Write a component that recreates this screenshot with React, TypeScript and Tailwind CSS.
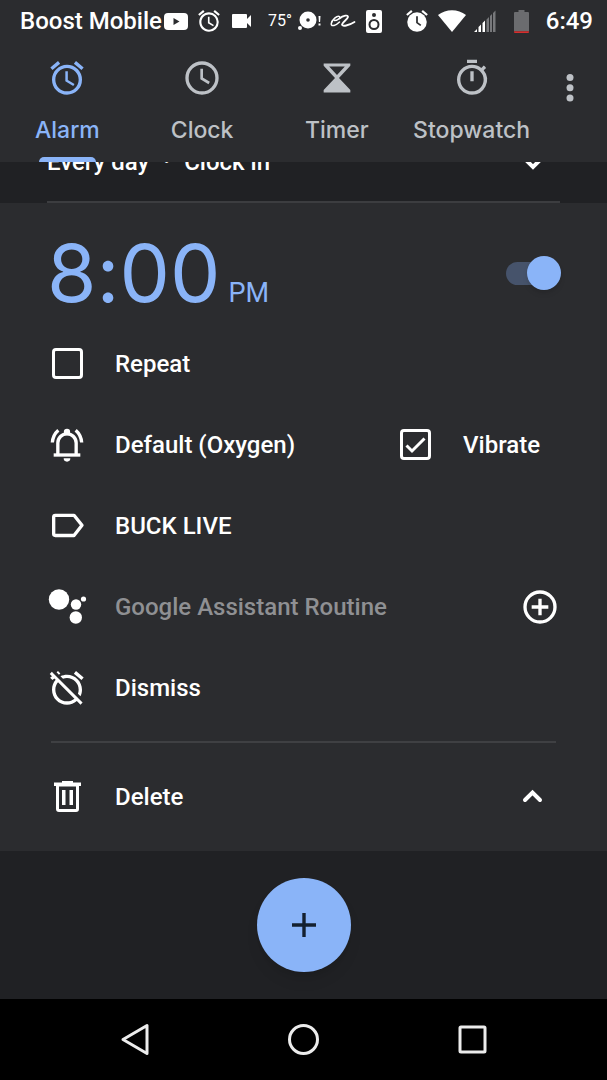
import React, { useState } from "react";

const ALARM_PATH =
  "M22 5.72l-4.6-3.86-1.29 1.53 4.6 3.86L22 5.72zM7.88 3.39L6.6 1.86 2 5.71l1.29 1.53 4.59-3.85zM12.5 8H11v6l4.75 2.85.75-1.23-4-2.37V8zM12 4c-4.97 0-9 4.03-9 9s4.02 9 9 9a9 9 0 0 0 0-18zm0 16c-3.87 0-7-3.13-7-7s3.13-7 7-7 7 3.13 7 7-3.13 7-7 7z";

const tabs = [
  {
    id: "alarm",
    label: "Alarm",
    icon: <path d={ALARM_PATH} />,
  },
  {
    id: "clock",
    label: "Clock",
    icon: (
      <g fill="none" stroke="currentColor">
        <circle cx="12" cy="12" r="9" strokeWidth="2" />
        <path d="M11.8 6.5V12.3L16.3 15" strokeWidth="1.6" />
      </g>
    ),
  },
  {
    id: "timer",
    label: "Timer",
    icon: (
      <path
        fillRule="evenodd"
        d="M4 3.3H20V4.6L13.2 12 20 19.2V20.7H4V19.2L10.8 12 4 4.6ZM7.3 5.1L12 10.2 16.7 5.1Z"
      />
    ),
  },
  {
    id: "stopwatch",
    label: "Stopwatch",
    icon: (
      <path d="M15 1H9v2h6V1zm-4 13h2V8h-2v6zm8.03-6.61 1.42-1.42c-.43-.51-.9-.99-1.41-1.41l-1.42 1.42A8.962 8.962 0 0 0 12 4c-4.97 0-9 4.03-9 9s4.02 9 9 9a8.994 8.994 0 0 0 7.03-14.61zM12 20c-3.87 0-7-3.13-7-7s3.13-7 7-7 7 3.13 7 7-3.13 7-7 7z" />
    ),
  },
];

function StatusBar() {
  return (
    <div className="flex h-[42px] items-center pl-5 pr-3.5 text-2xl font-medium text-white">
      <span>Boost Mobile</span>
      {/* Notification icons */}
      <svg className="ml-0.5 h-[17px] w-6" viewBox="0 0 24 17">
        <rect width="24" height="17" rx="4" fill="white" />
        <path d="M9.5 5l6 3.5-6 3.5z" fill="#2b2c2f" />
      </svg>
      <svg className="ml-2 size-[26px]" viewBox="0 0 24 24" fill="white">
        <path d={ALARM_PATH} />
      </svg>
      <svg className="ml-2.5 h-3.5 w-5" viewBox="0 0 20 14" fill="white">
        <path d="M1 0h13a1 1 0 0 1 1 1v4l4-4v12l-4-4v4a1 1 0 0 1-1 1H1a1 1 0 0 1-1-1V1a1 1 0 0 1 1-1z" />
      </svg>
      <span className="ml-4 text-base font-normal">75°</span>
      <svg className="ml-1.5 h-6 w-6" viewBox="0 0 24 24">
        <circle cx="10" cy="11" r="8.5" fill="white" />
        <circle cx="2" cy="19" r="2" fill="white" />
        <circle cx="10" cy="11" r="1.8" fill="#2b2c2f" />
        <path d="M20.5 7h2l-.4 6h-1.2zM20.5 14.5h2v2h-2z" fill="white" />
      </svg>
      <svg className="ml-2 h-5 w-[26px]" viewBox="0 0 26 20" fill="none" stroke="white" strokeLinecap="round">
        <path d="M4.5 9.5C7 9.5 11 7 9.5 5.5C7.5 4 1.5 9 1.2 13C1.200 16 6 14.500 9.500 11" strokeWidth="1.5" />
        <path d="M9.500 7.500C13 4.500 18.500 3.500 18 6C17.500 8.500 12.500 11 12 13.500C12 16 19 14.500 24.500 11" strokeWidth="1.8" />
      </svg>
      <svg className="ml-2.5 h-[23px] w-4" viewBox="0 0 16 23">
        <rect width="16" height="23" rx="2" fill="white" />
        <circle cx="8" cy="5" r="2" fill="#2b2c2f" />
        <circle cx="8" cy="14.5" r="4.5" fill="none" stroke="#2b2c2f" strokeWidth="2" />
      </svg>

      {/* System icons */}
      <svg className="ml-auto size-[26px]" viewBox="0 0 24 24" fill="white">
        <path d="M22 5.72l-4.6-3.86-1.29 1.53 4.6 3.86L22 5.72zM7.88 3.39L6.6 1.86 2 5.71l1.29 1.53 4.59-3.85z" />
        <circle cx="12" cy="13" r="9" />
        <path d="M12 7.5V13.5L15.5 16" fill="none" stroke="#2b2c2f" strokeWidth="1.6" />
      </svg>
      <svg className="ml-2 h-[22px] w-7" viewBox="0 0 28 22" fill="white">
        <path d="M0 5C8-1.5 20-1.5 28 5L14 22z" />
      </svg>
      <svg className="ml-2 h-[22px] w-[22px]" viewBox="0 0 22 22">
        <path d="M0 22l3-3v3zM4.500 22v-5l2.500-2.500V22zM8.500 22v-9l2.500-2.500V22z" fill="white" />
        <path d="M12.5 22V9.5L15 7v15zM16 22V6l2-2v18zM19 22V3l2.500-2.500V22z" fill="#77787b" />
      </svg>
      <svg className="ml-[18px] h-[23px] w-4" viewBox="0 0 16 23">
        <path d="M4.500 0h6v2H14a1 1 0 0 1 1 1v18H0V3a1 1 0 0 1 1-1h3.500z" fill="#6b6c6f" />
        <path d="M0 21.300h15V22a1 1 0 0 1-1 1H1a1 1 0 0 1-1-1z" fill="#d32f2f" />
      </svg>
      <span className="ml-4">6:49</span>
    </div>
  );
}

function RowIcon({ children, viewBox = "0 0 24 24" }: { children: React.ReactNode; viewBox?: string }) {
  return (
    <svg className="size-10 shrink-0" viewBox={viewBox} fill="currentColor">
      {children}
    </svg>
  );
}

function CheckBox({ checked, onChange }: { checked: boolean; onChange: () => void }) {
  return (
    <span className="relative flex size-10 shrink-0 items-center justify-center">
      <input
        type="checkbox"
        checked={checked}
        onChange={onChange}
        className="size-[31px] appearance-none rounded-[4px] border-[3px] border-white"
      />
      {checked && (
        <svg className="pointer-events-none absolute size-10" viewBox="0 0 40 40" fill="none" stroke="white" strokeWidth="3">
          <path d="M11.5 20.5L17 26 29.5 13.5" />
        </svg>
      )}
    </span>
  );
}

export default function App() {
  const [activeTab, setActiveTab] = useState("alarm");
  const [enabled, setEnabled] = useState(true);
  const [repeat, setRepeat] = useState(false);
  const [vibrate, setVibrate] = useState(true);

  return (
    <div className="flex min-h-screen flex-col bg-[#202124] font-['Roboto',sans-serif] text-2xl font-medium text-white">
      <header className="bg-[#2b2c2f]">
        <StatusBar />
        <div className="flex items-start">
          <nav className="grid flex-1 grid-cols-4">
            {tabs.map((tab) => (
              <button
                key={tab.id}
                onClick={() => setActiveTab(tab.id)}
                className={`flex flex-col items-center pt-4 ${activeTab === tab.id ? "text-[#8ab4f8]" : "text-[#bdc1c6]"}`}
              >
                <svg className="size-10" viewBox="0 0 24 24" fill="currentColor">
                  {tab.icon}
                </svg>
                <span className="mt-4 font-['Inter',sans-serif] text-[23px] leading-8 font-medium">{tab.label}</span>
                <span
                  className={`mt-[11px] h-[5px] w-[57px] rounded-t-[5px] ${activeTab === tab.id ? "bg-[#8ab4f8]" : ""}`}
                />
              </button>
            ))}
          </nav>
          <button aria-label="More options" className="mt-[26px] w-17 pr-2 text-[#bdc1c6]">
            <svg className="mx-auto size-10" viewBox="0 0 40 40" fill="currentColor">
              <circle cx="21" cy="9.5" r="3.5" />
              <circle cx="21" cy="19.7" r="3.5" />
              <circle cx="21" cy="30" r="3.5" />
            </svg>
          </button>
        </div>
      </header>

      <main className="flex flex-1 flex-col">
        {/* Previous alarm, scrolled under the header */}
        <div className="mx-[47px] flex h-[41px] items-end gap-3.5 overflow-hidden border-b-2 border-[#3c3d40] pb-[23px]">
          <span>Every day</span>
          <span>·</span>
          <span>Clock in</span>
          <svg className="mr-2 -mb-1 ml-auto size-10" viewBox="0 0 40 40" fill="none" stroke="white" strokeWidth="4">
            <path d="M11 15l10 10L31 15" />
          </svg>
        </div>

        {/* Expanded alarm */}
        <section className="bg-[#2b2c2f] px-[47px]">
          <div className="flex h-[120px] items-center justify-between pt-5">
            <button className="flex items-baseline gap-2 text-[#8ab4f8]">
              <span className="font-['Inter',sans-serif] text-[80px] leading-[100px] font-normal [font-feature-settings:'calt'_0]">
                8:00
              </span>
              <span className="text-[27px] font-normal">PM</span>
            </button>
            <input
              type="checkbox"
              role="switch"
              aria-label="Alarm on"
              checked={enabled}
              onChange={() => setEnabled(!enabled)}
              className="relative h-[23px] w-[54px] appearance-none rounded-full bg-[#46536b] before:absolute before:-top-[6px] before:left-0 before:size-[34px] before:rounded-full before:bg-[#9aa0a6] before:shadow-md checked:before:left-[21px] checked:before:bg-[#8ab4f8]"
            />
          </div>

          <label className="flex h-[81px] items-center gap-7">
            <CheckBox checked={repeat} onChange={() => setRepeat(!repeat)} />
            Repeat
          </label>

          <div className="flex h-[81px] items-center justify-between">
            <button className="flex items-center gap-7">
              <RowIcon>
                <g fill="none" stroke="currentColor" strokeWidth="2">
                  <path d="M6.5 18V10.8a5.5 5.5 0 0 1 11 0V18" />
                  <path d="M4 18h16" />
                  <path d="M3.2 10.5C3.4 7.5 4.6 5 6.8 3.1M20.8 10.5C20.6 7.5 19.4 5 17.2 3.1" />
                </g>
                <circle cx="12" cy="4.200" r="1.900" />
                <path d="M10 20h4a2 2 0 0 1-4 0z" />
              </RowIcon>
              Default (Oxygen)
            </button>
            <label className="mr-5 flex items-center gap-7">
              <CheckBox checked={vibrate} onChange={() => setVibrate(!vibrate)} />
              Vibrate
            </label>
          </div>

          <button className="flex h-[81px] w-full items-center gap-7">
            <RowIcon>
              <path
                d="M5 5.6h11.200l4.800 6-4.800 6.100H5a1 1 0 0 1-1-1V6.600a1 1 0 0 1 1-1z"
                fill="none"
                stroke="currentColor"
                strokeWidth="2"
                strokeLinejoin="round"
              />
            </RowIcon>
            BUCK LIVE
          </button>

          <button className="flex h-[81px] w-full items-center gap-7">
            <RowIcon viewBox="0 0 40 40">
              <circle cx="12" cy="12.5" r="10.2" />
              <circle cx="29" cy="17.5" r="5.2" />
              <circle cx="36.5" cy="12" r="2.6" />
              <circle cx="28.8" cy="30.500" r="6.2" />
            </RowIcon>
            <span className="flex-1 text-left text-[#8f9093]">Google Assistant Routine</span>
            <RowIcon>
              <g fill="none" stroke="currentColor" strokeWidth="2">
                <circle cx="12" cy="12" r="9" />
                <path d="M12 7v10M7 12h10" />
              </g>
            </RowIcon>
          </button>

          <button className="flex h-[81px] w-full items-center gap-7">
            <RowIcon>
              <path d="M12 6c3.87 0 7 3.13 7 7 0 .84-.16 1.65-.43 2.4l1.52 1.52c.58-1.19.91-2.51.91-3.92 0-4.97-4.03-9-9-9-1.41 0-2.73.33-3.92.91L9.6 6.43C10.35 6.16 11.16 6 12 6zm10-.28l-4.6-3.86-1.29 1.53 4.6 3.86L22 5.72zM2.92 2.29L1.65 3.57 2.98 4.9l-1.11.93 1.42 1.42 1.11-.94.8.8C3.83 8.69 3 10.75 3 13c0 4.97 4.02 9 9 9 2.25 0 4.31-.83 5.89-2.2l2.2 2.2 1.27-1.27L3.89 3.27l-.97-.98zm13.55 16.1C15.26 19.39 13.7 20 12 20c-3.87 0-7-3.13-7-7 0-1.7.61-3.26 1.61-4.47l9.86 9.86zM8.02 3.28L6.6 1.86l-.86.71 1.42 1.42.86-.71z" />
            </RowIcon>
            Dismiss
          </button>

          <hr className="mx-1 mt-[13px] border-t-2 border-[#3f4043]" />

          <div className="flex h-[108px] items-center justify-between">
            <button className="flex items-center gap-7">
              <RowIcon viewBox="0 0 40 40">
                <path d="M15 4h11v1.5h8v3.500H7V5.500h8z" />
                <path
                  d="M10.5 8h20v24a1.5 1.5 0 0 1-1.5 1.5H12a1.5 1.5 0 0 1-1.5-1.5z"
                  fill="none"
                  stroke="currentColor"
                  strokeWidth="3"
                />
                <path d="M15 13h3.500v15H15zM22.500 13H26v15h-3.500z" />
              </RowIcon>
              Delete
            </button>
            <button aria-label="Collapse alarm" className="mr-2">
              <svg className="size-10" viewBox="0 0 40 40" fill="none" stroke="white" strokeWidth="4" strokeLinecap="round">
                <path d="M13 23l7.500-7.500L28 23" />
              </svg>
            </button>
          </div>
        </section>

        <div className="flex min-h-[148px] flex-1 items-center justify-center">
          <button
            aria-label="Add alarm"
            className="flex size-[94px] items-center justify-center rounded-full bg-[#8ab4f8] shadow-lg"
          >
            <svg className="size-6" viewBox="0 0 24 24" stroke="#14202f" strokeWidth="3.4">
              <path d="M12 0v24M0 12h24" />
            </svg>
          </button>
        </div>
      </main>

      {/* System navigation */}
      <footer className="grid h-[81px] grid-cols-3 items-center justify-items-center bg-black px-[50px]">
        <button aria-label="Back">
          <svg className="size-10" viewBox="0 0 40 40" fill="none" stroke="#ececec" strokeWidth="3" strokeLinejoin="round">
            <path d="M32 5.500v28L8 19.500z" />
          </svg>
        </button>
        <button aria-label="Home">
          <svg className="size-10" viewBox="0 0 40 40" fill="none" stroke="#ececec" strokeWidth="3">
            <circle cx="19.5" cy="19.5" r="14" />
          </svg>
        </button>
        <button aria-label="Recent apps">
          <svg className="size-10" viewBox="0 0 40 40" fill="none" stroke="#ececec" strokeWidth="3">
            <rect x="7" y="7" width="25" height="25" rx="1" />
          </svg>
        </button>
      </footer>
    </div>
  );
}
